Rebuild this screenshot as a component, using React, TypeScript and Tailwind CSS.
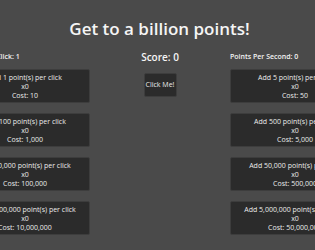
const clickUpgrades = [
  { amount: "1", cost: "10" },
  { amount: "100", cost: "1,000" },
  { amount: "10,000", cost: "100,000" },
  { amount: "1,000,000", cost: "10,000,000" },
]

const autoUpgrades = [
  { amount: "5", cost: "50" },
  { amount: "500", cost: "5,000" },
  { amount: "50,000", cost: "500,000" },
  { amount: "5,000,000", cost: "50,000,000" },
]

function UpgradeButton({ label, count, cost }: { label: string; count: number; cost: string }) {
  return (
    <button className="w-[130px] h-[34px] bg-[#2b2b2b] border border-[#3d3d3d] rounded-[2px] flex flex-col items-center justify-center text-[7px] leading-[9px] text-[#ececec] whitespace-nowrap">
      <span>{label}</span>
      <span>x{count}</span>
      <span>Cost: {cost}</span>
    </button>
  )
}

function Column({ title, children }: { title: string; children: React.ReactNode }) {
  return (
    <div className="w-[130px] flex flex-col shrink-0">
      <div className="text-[7px] leading-[10px] font-semibold text-[#f2f2f2] whitespace-nowrap h-[10px] mt-[1px]">{title}</div>
      <div className="flex flex-col gap-[10px] mt-[7px]">{children}</div>
    </div>
  )
}

export default function App() {
  return (
    <div
      className="w-[315px] h-[250px] bg-[#4a4a4a] overflow-hidden text-white"
      style={{ fontFamily: '"Open Sans", "Noto Sans", sans-serif' }}
    >
      <h1 className="pt-[17px] text-center text-[17px] leading-[24px] font-semibold text-[#f5f5f5] ml-[4px]">
        Get to a billion points!
      </h1>
      <div className="flex justify-center mt-[10px]">
        <div className="flex items-start gap-[53px] shrink-0 ml-[5px]">
          <Column title="Points Per Click: 1">
            {clickUpgrades.map((u) => (
              <UpgradeButton key={u.amount} label={`Add ${u.amount} point(s) per click`} count={0} cost={u.cost} />
            ))}
          </Column>
          <div className="w-[34px] flex flex-col items-center shrink-0">
            <div className="text-[10px] leading-[13px] font-semibold text-[#f5f5f5] whitespace-nowrap">Score: 0</div>
            <button className="mt-[9px] w-[33px] h-[24px] bg-[#2b2b2b] border border-[#3d3d3d] rounded-[2px] text-[7px] text-[#ececec] whitespace-nowrap flex items-center justify-center">
              Click Me!
            </button>
          </div>
          <Column title="Points Per Second: 0">
            {autoUpgrades.map((u) => (
              <UpgradeButton key={u.amount} label={`Add ${u.amount} point(s) per click`} count={0} cost={u.cost} />
            ))}
          </Column>
        </div>
      </div>
    </div>
  )
}
